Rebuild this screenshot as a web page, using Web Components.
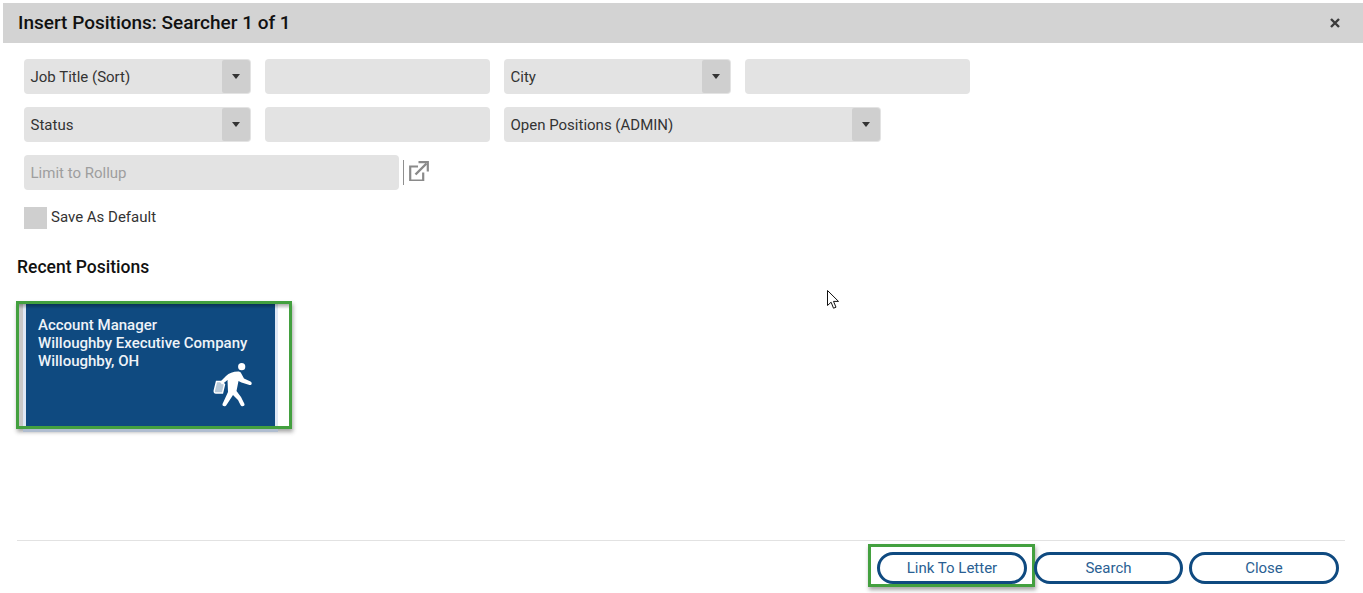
<!DOCTYPE html>
<html>
<head>
<meta charset="utf-8">
<title>Insert Positions</title>
<style>
  html, body { margin: 0; padding: 0; background: #fff; }
  body { width: 1363px; height: 593px; overflow: hidden; font-family: Roboto, "Liberation Sans", sans-serif; position: relative; }
</style>
</head>
<body>
<ip-dialog>
  <ip-header slot="header">Insert Positions: Searcher 1 of 1</ip-header>
  <ip-row slot="form">
    <ip-select style="width:227px">Job Title (Sort)</ip-select>
    <ip-input style="width:225px"></ip-input>
    <ip-select style="width:227px">City</ip-select>
    <ip-input style="width:225px"></ip-input>
  </ip-row>
  <ip-row slot="form">
    <ip-select style="width:227px">Status</ip-select>
    <ip-input style="width:225px"></ip-input>
    <ip-select style="width:377px">Open Positions (ADMIN)</ip-select>
  </ip-row>
  <ip-rollup slot="form">Limit to Rollup</ip-rollup>
  <ip-check slot="form">Save As Default</ip-check>
  <ip-section slot="section">Recent Positions</ip-section>
  <ip-card slot="cards">
    <div>Account Manager</div>
    <div>Willoughby Executive Company</div>
    <div>Willoughby, OH</div>
  </ip-card>
  <ip-footer slot="footer">
    <ip-button highlight>Link To Letter</ip-button>
    <ip-button style="width:149px">Search</ip-button>
    <ip-button>Close</ip-button>
  </ip-footer>
</ip-dialog>
<ip-cursor></ip-cursor>

<script>
class IpElement extends HTMLElement {
  constructor() {
    super();
    this.attachShadow({mode: 'open'}).innerHTML = `<style>${this.constructor.css}</style>${this.constructor.html}`;
  }
}

class IpDialog extends IpElement {
  static css = `
    :host { display: flex; flex-direction: column; height: 593px; padding-top: 3px; box-sizing: border-box; }
    .form { display: flex; flex-direction: column; padding: 16px 0 0 24px; }
    .section { padding: 27px 0 0 17px; }
    .cards { padding: 23px 0 0 16px; display: flex; }
    .foot { margin-top: auto; padding: 0 18px 0 17px; }
  `;
  static html = `
    <slot name="header"></slot>
    <div class="form"><slot name="form"></slot></div>
    <div class="section"><slot name="section"></slot></div>
    <div class="cards"><slot name="cards"></slot></div>
    <div class="foot"><slot name="footer"></slot></div>
  `;
}

class IpHeader extends IpElement {
  static css = `
    :host { display: flex; align-items: center; justify-content: space-between; height: 40px; margin-left: 3px;
      background: #d3d3d3; padding: 0 23px 0 15px; font: 500 19px/20px Roboto, sans-serif; color: #111; box-sizing: border-box; }
    svg { display: block; }
  `;
  static html = `
    <slot></slot>
    <svg width="10" height="10" viewBox="0 0 10 10"><path d="M1 1 9 9M9 1 1 9" stroke="#3c3c3c" stroke-width="2.4" fill="none"/></svg>
  `;
}

class IpRow extends IpElement {
  static css = `:host { display: flex; gap: 14px; margin-bottom: 13px; }`;
  static html = `<slot></slot>`;
}

class IpInput extends IpElement {
  static css = `:host { display: block; height: 35px; background: #e3e3e3; border-radius: 4px; }`;
  static html = ``;
}

class IpSelect extends IpElement {
  static css = `
    :host { display: flex; align-items: stretch; height: 35px; background: #e3e3e3; border-radius: 4px; box-sizing: border-box;
      font: 15px/36px Roboto, sans-serif; color: #333; overflow: hidden; }
    .label { flex: 1; padding-left: 6.5px; }
    .arrow { width: 28px; margin: 1px 1px 1px 0; background: #cfcfcf; border-radius: 2px 3px 3px 2px; display: flex; align-items: center; justify-content: center; }
    .arrow i { width: 0; height: 0; border: 4.5px solid transparent; border-top: 5px solid #333; border-bottom: 0; }
  `;
  static html = `<div class="label"><slot></slot></div><div class="arrow"><i></i></div>`;
}

class IpRollup extends IpElement {
  static css = `
    :host { display: flex; align-items: center; height: 35px; font: 15px/36px Roboto, sans-serif; color: #9e9e9e; }
    .box { width: 375px; height: 35px; background: #e3e3e3; border-radius: 4px; padding-left: 6.5px; box-sizing: border-box; }
    .sep { width: 1px; height: 25px; background: #8f8f8f; margin: 0 5px 0 4px; }
    svg { display: block; margin-bottom: 3px; }
  `;
  static html = `
    <div class="box"><slot></slot></div>
    <div class="sep"></div>
    <svg width="20" height="20" viewBox="0 0 20 20" fill="none" stroke="#8a8a8a">
      <path d="M9 5.500H1.200v14h13V11.500" stroke-width="2.200"/>
      <path d="M6.500 13.500 17.500 2.500" stroke-width="2.400"/>
      <path d="M9.500 1.200h9.300v9.300" stroke-width="2.200"/>
    </svg>
  `;
}

class IpCheck extends IpElement {
  static css = `
    :host { display: flex; align-items: center; gap: 4px; margin-top: 17px; height: 22px; font: 15px/20px Roboto, sans-serif; color: #333; }
    .box { width: 23px; height: 22px; background: #cfcfcf; }
    .txt { margin-bottom: 2px; }
  `;
  static html = `<div class="box"></div><div class="txt"><slot></slot></div>`;
}

class IpSection extends IpElement {
  static css = `:host { display: block; font: 500 17.5px/22px Roboto, sans-serif; color: #111; }`;
  static html = `<slot></slot>`;
}

class IpCard extends IpElement {
  static css = `
    :host { display: block; position: relative; width: 276px; height: 128px; box-sizing: border-box; border: 3px solid #43a03f;
      box-shadow: 1px 3px 4px rgba(60,60,60,.45); font: 500 15px/18px Roboto, sans-serif; color: #eef3f8; background: #fff; }
    :host::after { content: ''; position: absolute; left: 4px; right: 11px; bottom: -6px; height: 3px; background: #b0bdd0; }
    .inner { display: flex; height: 100%; position: relative; }
    .inner::after { content: ''; position: absolute; inset: 0 0 auto 0; height: 5px; background: linear-gradient(rgba(0,0,0,.32), rgba(0,0,0,0)); }
    .left { width: 7px; background: linear-gradient(90deg, #c8c8c8 4px, #dfe8f5 4px); }
    .blue { width: 249px; background: #0f4a80; box-sizing: border-box; padding: 12px 0 0 12px; display: flex; flex-direction: column; }
    .txt { margin-bottom: -20px; }
    .right { width: 3px; background: #dfe8f5; }
    .icon { margin: auto 0 18px auto; padding-right: 23px; display: block; }
    svg { display: block; overflow: visible; }
  `;
  static html = `
    <div class="inner">
      <div class="left"></div>
      <div class="blue">
        <div class="txt"><slot></slot></div>
        <div class="icon">
          <svg width="38" height="46" viewBox="0 0 38 46" fill="#fff">
            <circle cx="27.700" cy="4.700" r="3.600"/>
            <path d="M24 9.500C19 9.500 15 11 12 14L6 20l2 2.500L13.500 18 14 30 8.500 42c-.5 2.500 3 3 4 1L19 33l5 5 2.500 5c1 2 4.500 1.500 4-1L27 35l-4.500-6 2-10 3 1.500 8 2.500c2.500.5 3-2.500 1-3.500L30 16.500 27 11c-.5-1-1.500-1.500-3-1.500z"/>
            <path d="M2.500 19.500h5l3 3-2 8.500H2C.5 31 0 30 .3 28.500z" fill="#fff" fill-opacity=".7" stroke="#fff" stroke-width="1.400"/>
          </svg>
        </div>
      </div>
      <div class="right"></div>
    </div>
  `;
}

class IpFooter extends IpElement {
  static css = `
    :host { display: flex; justify-content: flex-end; gap: 6px; border-top: 1px solid #e2e2e2; padding: 11px 6px 9px 0; }
  `;
  static html = `<slot></slot>`;
}

class IpButton extends IpElement {
  static css = `
    :host { display: block; position: relative; width: 150px; height: 32px; box-sizing: border-box; border: 3px solid #0f4a80; border-radius: 16px;
      font: 15px/27px Roboto, sans-serif; color: #2a5f93; text-align: center; background: #fff; }
    :host([highlight]) { margin-right: 1px; }
    :host([highlight])::after { content: ''; position: absolute; left: -12px; top: -11px; width: 161px; height: 37px;
      border: 3px solid #43a03f; box-shadow: 1px 3px 4px rgba(60,60,60,.45); pointer-events: none; }
  `;
  static html = `<slot></slot>`;
}

class IpCursor extends IpElement {
  static css = `:host { position: absolute; left: 827px; top: 290px; display: block; width: 12px; height: 20px; }`;
  static html = `
    <svg width="12" height="20" viewBox="0 0 12 20"><path d="M.5.500v15l3.600-3.300 2.400 6 2.500-1-2.500-5.800h5z" fill="#fff" stroke="#111"/></svg>
  `;
}

customElements.define('ip-dialog', IpDialog);
customElements.define('ip-header', IpHeader);
customElements.define('ip-row', IpRow);
customElements.define('ip-input', IpInput);
customElements.define('ip-select', IpSelect);
customElements.define('ip-rollup', IpRollup);
customElements.define('ip-check', IpCheck);
customElements.define('ip-section', IpSection);
customElements.define('ip-card', IpCard);
customElements.define('ip-footer', IpFooter);
customElements.define('ip-button', IpButton);
customElements.define('ip-cursor', IpCursor);
</script>
</body>
</html>
